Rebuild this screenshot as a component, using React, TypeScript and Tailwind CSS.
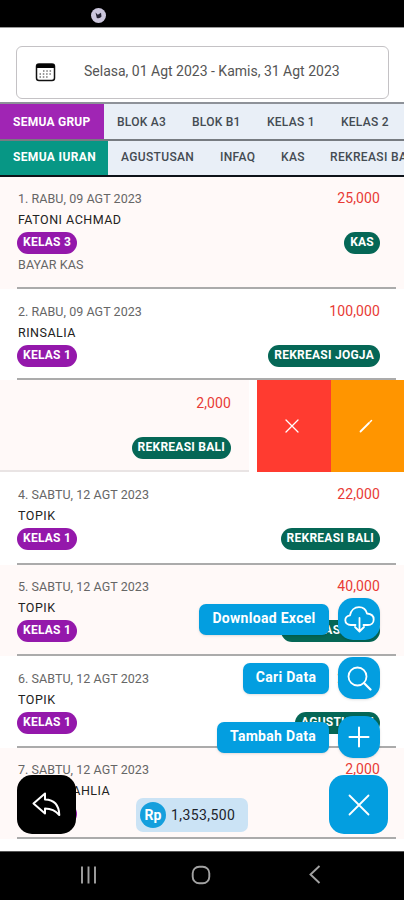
import React from "react";

type Item = {
  date: string;
  name: string;
  group: string;
  amount: string;
  fund: string;
  note?: string;
  height: string;
  tint: boolean;
};

const first: Item[] = [
  { date: "1. RABU, 09 AGT 2023", name: "FATONI ACHMAD", group: "KELAS 3", amount: "25,000", fund: "KAS", note: "BAYAR KAS", height: "h-[112px] pt-[12px]", tint: true },
  { date: "2. RABU, 09 AGT 2023", name: "RINSALIA", group: "KELAS 1", amount: "100,000", fund: "REKREASI JOGJA", height: "h-[91px] pt-[13px]", tint: false },
];

const rest: Item[] = [
  { date: "4. SABTU, 12 AGT 2023", name: "TOPIK", group: "KELAS 1", amount: "22,000", fund: "REKREASI BALI", height: "h-[93px] pt-[13px]", tint: false },
  { date: "5. SABTU, 12 AGT 2023", name: "TOPIK", group: "KELAS 1", amount: "40,000", fund: "REKREASI BALI", height: "h-[91px] pt-[12px]", tint: true },
  { date: "6. SABTU, 12 AGT 2023", name: "TOPIK", group: "KELAS 1", amount: "22,000", fund: "AGUSTUSAN", height: "h-[92px] pt-[13px]", tint: false },
  { date: "7. SABTU, 12 AGT 2023", name: "NURUL DAHLIA", group: "KELAS 1", amount: "2,000", fund: "KAS", height: "h-[91px] pt-[12px]", tint: true },
];

function Pill({ text, color }: { text: string; color: string }) {
  return (
    <span className={`flex h-[22px] items-center rounded-full px-[6px] pb-[2px] text-[12px] font-bold tracking-[0.25px] whitespace-nowrap text-white ${color}`}>
      {text}
    </span>
  );
}

function Row({ item }: { item: Item }) {
  return (
    <div className={`flex shrink-0 flex-col pr-2 pl-[17px] ${item.height} ${item.tint ? "bg-[#fff9f8]" : "bg-white"}`}>
      <div className="flex flex-1 justify-between border-b-2 border-[#ababab] pr-[16px]">
        <div className="flex flex-col items-start">
          <span className="ml-px h-[21px] text-[12.5px] leading-[20px] tracking-[0.05px] text-[#666]">{item.date}</span>
          <span className="ml-px h-[22px] text-[12.5px] leading-[20px] tracking-[0.5px] text-[#222]">{item.name}</span>
          <Pill text={item.group} color="bg-[#9418ab]" />
          {item.note && <span className="ml-px text-[12.5px] leading-[22px] tracking-[0.1px] text-[#666]">{item.note}</span>}
        </div>
        <div className="flex flex-col items-end">
          <span className="h-[43px] text-[14px] leading-[19px] tracking-[0.1px] text-[#e83a36]">{item.amount}</span>
          <Pill text={item.fund} color="bg-[#056756]" />
        </div>
      </div>
    </div>
  );
}

function SwipedRow() {
  return (
    <div className="flex h-[92px] shrink-0 bg-white">
      <div className="flex w-[249px] flex-col items-end border-b-2 border-[#e9e4e4] bg-[#fff9f8] pt-[14px] pr-[18px]">
        <span className="h-[43px] text-[14px] leading-[19px] tracking-[0.1px] text-[#e83a36]">2,000</span>
        <Pill text="REKREASI BALI" color="bg-[#056756]" />
      </div>
      <div className="ml-2 flex w-[74px] items-center justify-center bg-[#ff3b30] pr-[5px]">
        <svg width="14" height="14" viewBox="0 0 14 14" stroke="#fff" strokeWidth="1.3" strokeLinecap="round">
          <path d="M1 1l12 12M13 1L1 13" />
        </svg>
      </div>
      <div className="flex flex-1 items-center justify-center bg-[#ff9500] pr-[4px]">
        <svg width="14" height="14" viewBox="0 0 14 14" stroke="#fff" strokeLinecap="round">
          <path d="M1.5 12.5L10 4" strokeWidth="1.8" />
          <path d="M11 3L12.5 1.5" strokeWidth="1.5" />
        </svg>
      </div>
    </div>
  );
}

function Action({ label, width, children }: { label: string; width: string; children: React.ReactNode }) {
  return (
    <div className="flex h-[42px] items-center justify-end gap-[9px]">
      <div className={`flex h-[31px] items-center justify-center rounded-[7px] bg-[#039ee0] pb-[2px] text-[14px] font-bold tracking-[0.3px] whitespace-nowrap text-white shadow ${width}`}>
        {label}
      </div>
      <div className="flex size-[42px] items-center justify-center rounded-[15px] bg-[#039ee0] shadow">{children}</div>
    </div>
  );
}

export default function App() {
  return (
    <div className="relative flex h-[900px] w-[404px] flex-col overflow-hidden bg-white font-[Roboto,sans-serif]">
      <div className="flex h-[27px] shrink-0 justify-center bg-black pt-2">
        <div className="mr-[207px] flex size-[15px] items-center justify-center rounded-full bg-[#cbc6dc]">
          <svg width="7" height="7" viewBox="0 0 7 7">
            <path d="M0.5 0.5L2.8 2.8L6 0.8L6.5 4.5Q5 7 1.8 6Z" fill="#252333" />
          </svg>
        </div>
      </div>
      <div className="h-[75px] shrink-0 border-t border-[#999] pt-[18px] pl-4">
        <div className="flex h-[53px] w-[373px] items-center rounded-md border border-[#c4c2c5] pl-[18px]">
          <svg width="21" height="19" viewBox="0 0 21 19">
            <rect x="1.5" y="1" width="18" height="16.5" rx="2.5" fill="#fff" stroke="#111" strokeWidth="1.5" />
            <path d="M1.5 5V3Q1.5 1 3.5 1H17.5Q19.5 1 19.5 3V5Z" fill="#050505" />
            <path d="M8 8H17M4.5 11H17M4.5 14H13.5" stroke="#777" strokeWidth="1.5" strokeDasharray="1.5 1.8" />
          </svg>
          <span className="ml-7 pb-[2px] text-[14px] whitespace-nowrap text-[#555]">Selasa, 01 Agt 2023 - Kamis, 31 Agt 2023</span>
        </div>
      </div>
      <div className="flex h-[37px] shrink-0 items-stretch border-t-2 border-[#8e9299] bg-[#e9eff7] text-[12px] font-medium tracking-[0.25px] whitespace-nowrap text-[#444b52]">
        <div className="flex w-[104px] items-center bg-[#a025b4] pl-[13px] font-bold text-white">SEMUA GRUP</div>
        <div className="flex items-center pl-[13px]">
          <span className="w-[75px]">BLOK A3</span>
          <span className="w-[75px]">BLOK B1</span>
          <span className="w-[74px]">KELAS 1</span>
          <span>KELAS 2</span>
        </div>
      </div>
      <div className="flex h-[38px] shrink-0 items-stretch overflow-hidden border-t-2 border-b-2 border-t-[#777b81] border-b-[#0d1218] bg-[#e9eff7] text-[12px] font-medium tracking-[0.35px] whitespace-nowrap text-[#444b52]">
        <div className="flex w-[108px] shrink-0 items-center bg-[#079785] pb-[3px] pl-[13px] font-bold text-white">SEMUA IURAN</div>
        <div className="flex shrink-0 items-center pb-[3px] pl-[13px]">
          <span className="w-[99px]">AGUSTUSAN</span>
          <span className="w-[61px]">INFAQ</span>
          <span className="w-[49px]">KAS</span>
          <span>REKREASI BALI</span>
        </div>
      </div>
      <div className="flex h-[674px] shrink-0 flex-col overflow-hidden">
        {first.map((item) => <Row key={item.date} item={item} />)}
        <SwipedRow />
        {rest.map((item) => <Row key={item.date} item={item} />)}
      </div>
      <div className="flex h-[49px] shrink-0 items-center border-t border-[#555] bg-black pb-[3px]">
        <svg className="ml-[80px]" width="17" height="18" viewBox="0 0 17 18" stroke="#a2a2a2" strokeWidth="1.9">
          <path d="M2 0.5v17M8.5 0.5v17M15 0.5v17" />
        </svg>
        <svg className="ml-[94px]" width="20" height="20" viewBox="0 0 20 20" fill="none" stroke="#a2a2a2" strokeWidth="1.9">
          <rect x="1.7" y="1.7" width="16.6" height="16.6" rx="6.5" />
        </svg>
        <svg className="ml-[98px]" width="12" height="19" viewBox="0 0 12 19" fill="none" stroke="#a2a2a2" strokeWidth="1.9">
          <path d="M10.5 1L1.5 9.5L10.5 18" />
        </svg>
      </div>

      <div className="absolute top-[598px] right-[24px] flex flex-col gap-[17px]">
        <Action label="Download Excel" width="w-[130px]">
          <svg width="31" height="27" viewBox="0 0 31 27" fill="none" stroke="#fff" strokeWidth="1.8" strokeLinecap="round" strokeLinejoin="round">
            <path d="M11.5 19H6.8C3.5 19 1.3 17 1.3 14.2C1.3 11.6 3.2 9.8 6 9.3C7 4.5 10.5 1.2 15 1.2C19 1.2 22 3.6 23 7.5C26.8 7.8 29.7 10 29.7 13.4C29.7 16.8 27.3 19 23.8 19H19.5" />
            <path d="M15.5 12V25M11 21L15.5 25.5L20 21" />
          </svg>
        </Action>
        <Action label="Cari Data" width="w-[86px]">
          <svg width="25" height="25" viewBox="0 0 25 25" fill="none" stroke="#fff" strokeWidth="1.8" strokeLinecap="round">
            <circle cx="10.5" cy="10.5" r="9" />
            <path d="M17 17L23.5 23.5" strokeWidth="2.2" />
          </svg>
        </Action>
        <Action label="Tambah Data" width="w-[112px]">
          <svg width="22" height="22" viewBox="0 0 22 22" stroke="#fff" strokeWidth="2" strokeLinecap="round">
            <path d="M11 1.5v19M1.5 11h19" />
          </svg>
        </Action>
      </div>

      <div className="absolute top-[775px] left-[17px] flex size-[59px] items-center justify-center rounded-[15px] bg-black">
        <svg width="29" height="25" viewBox="0 0 29 25" fill="none" stroke="#fff" strokeWidth="2" strokeLinejoin="round">
          <path d="M1.5 11.5L13 1.5V7.5C22 7.8 27 13 27.3 23C23.5 18.5 20 16.5 13 16.5V21.5Z" />
        </svg>
      </div>
      <div className="absolute top-[798px] left-[136px] flex h-[34px] w-[112px] items-center rounded-[7px] bg-[#cbe3f5] pl-1">
        <div className="flex size-[26px] items-center justify-center rounded-full bg-[#159fdd] text-[14px] font-bold text-white">Rp</div>
        <span className="ml-[5px] text-[14px] tracking-[0.4px] text-[#1b222b]">1,353,500</span>
      </div>
      <div className="absolute top-[775px] left-[329px] flex size-[59px] items-center justify-center rounded-[15px] bg-[#039ee0]">
        <svg width="22" height="22" viewBox="0 0 22 22" stroke="#fff" strokeWidth="1.8" strokeLinecap="round">
          <path d="M1.5 1.5l19 19M20.5 1.5l-19 19" />
        </svg>
      </div>
    </div>
  );
}
